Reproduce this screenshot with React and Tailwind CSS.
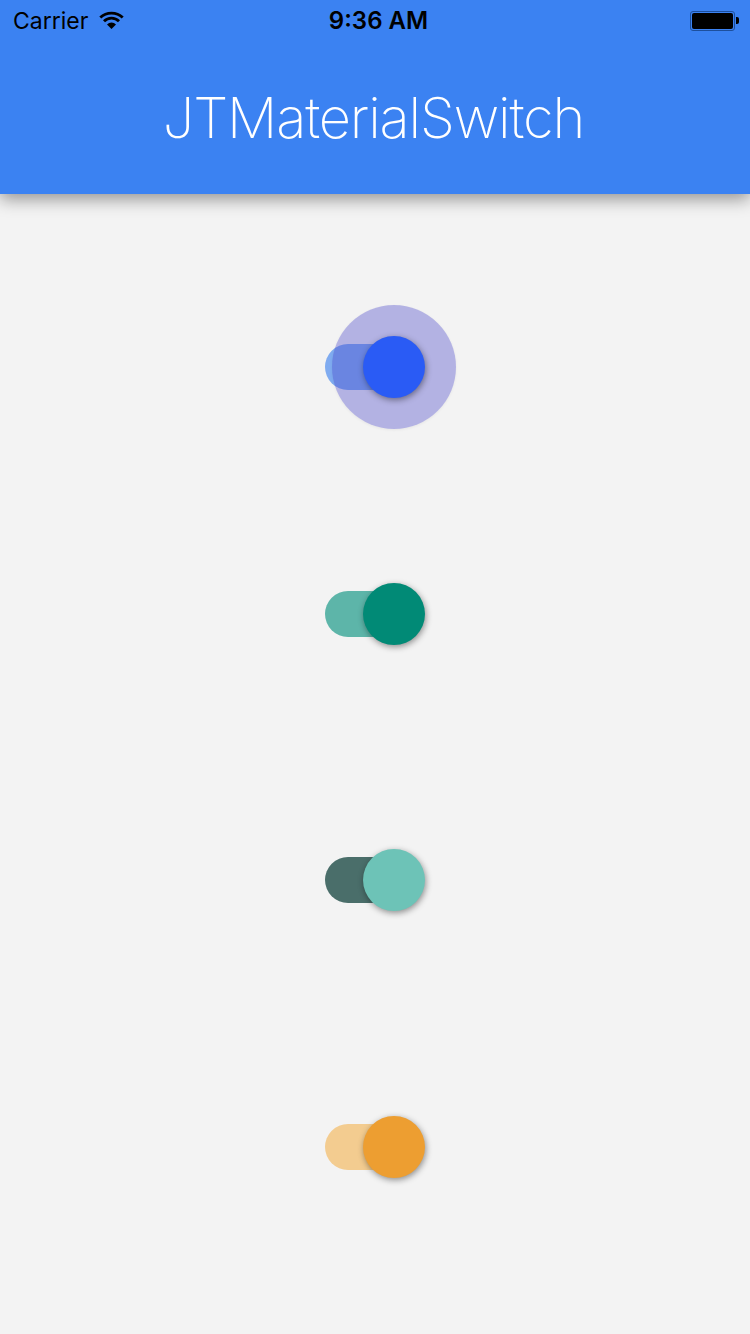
import React from 'react';

// the top switch is caught mid press, so it carries the ripple
const switches = [
  { id: 'blue', track: 'bg-[#7fabf0]', knob: 'bg-[#2a5bf5]', ripple: true },
  { id: 'green', track: 'bg-[#5db5a9]', knob: 'bg-[#018a76]' },
  { id: 'dark', track: 'bg-[#4a6e6a]', knob: 'bg-[#6dc3b7]' },
  { id: 'orange', track: 'bg-[#f3cc90]', knob: 'bg-[#ed9e31]' },
];

function Wifi() {
  return (
    <svg width="25" height="18" viewBox="0 0 25 18" className="ml-[11px] mt-[-1px]">
      <path d="M1.3 6.6 A16 16 0 0 1 23.7 6.6" fill="none" stroke="#000" strokeWidth="2.8" />
      <path d="M5 10.2 A10.5 10.5 0 0 1 20 10.2" fill="none" stroke="#000" strokeWidth="2.8" />
      <path d="M8 13.4 A6.5 6.5 0 0 1 17 13.4 L12.5 18 Z" fill="#000" />
    </svg>
  );
}

function Battery() {
  return (
    <div className="flex items-center">
      <div className="w-[45px] h-[20px] rounded-[3px] border border-[#1d4f9c] bg-[#3b82f2] p-[1px]">
        <div className="w-full h-full rounded-[2px] bg-black" />
      </div>
      <div className="ml-[1px] w-[3px] h-[7px] rounded-r-[2px] bg-black" />
    </div>
  );
}

function Switch({ track, knob, ripple }) {
  return (
    <div className="relative flex items-center w-[100px]">
      <div className={`w-[70px] h-[46px] rounded-full ${track}`} />
      {ripple && (
        <div className="absolute left-[7px] top-[-31px] w-[124px] h-[124px] rounded-full bg-[rgba(70,68,200,0.37)] shadow-[0_1px_3px_rgba(0,0,0,0.06)]" />
      )}
      <div className={`relative -ml-[32px] w-[62px] h-[62px] rounded-full ${knob} shadow-[1px_2px_6px_rgba(0,0,0,0.42)]`} />
    </div>
  );
}

export default function App() {
  return (
    <div className="w-[750px] h-[1334px] overflow-hidden bg-[#f3f3f3] font-['Inter',sans-serif]">
      <header className="relative z-10 flex flex-col h-[194px] bg-[#3b82f2] shadow-[0_5px_16px_rgba(0,0,0,0.4)]">
        <div className="grid grid-cols-3 items-center h-[41px] pl-[13px] pr-[11px] text-black">
          <div className="flex items-center">
            <span className="text-[23px] leading-[30px]">Carrier</span>
            <Wifi />
          </div>
          <span className="pl-[5px] text-center text-[24px] leading-[30px] font-semibold whitespace-nowrap">9:36 AM</span>
          <div className="flex justify-end">
            <Battery />
          </div>
        </div>
        <h1 className="pt-[44px] pr-[3px] text-center text-[56px] leading-[66px] font-extralight tracking-[-1.15px] text-white">JTMaterialSwitch</h1>
      </header>
      <main className="grid grid-rows-[227px_repeat(3,266.67px)] items-center pt-[59.5px] pl-[325px]">
        {switches.map((s) => (
          <Switch key={s.id} {...s} />
        ))}
      </main>
    </div>
  );
}
